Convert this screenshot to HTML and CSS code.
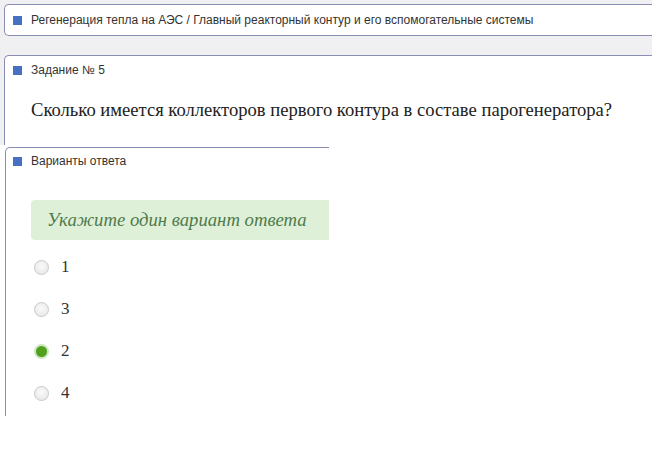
FILE: index.html
```html
<!DOCTYPE html>
<html lang="ru">
  <head>
    <meta charset="UTF-8" />
    <meta name="viewport" content="width=device-width, initial-scale=1.0" />
    <title>Задание № 5</title>
    <link rel="stylesheet" href="styles.css">
  </head>
  <body>
    <!-- верхняя часть: раздел и вопрос -->
    <div class="top">
      <div class="panel path">
        <span class="mark"></span>
        <span class="caption">Регенерация тепла на АЭС / Главный реакторный контур и его вспомогательные системы</span>
      </div>
      <div class="panel task">
        <div class="head">
          <span class="mark"></span>
          <span class="caption">Задание № 5</span>
        </div>
        <p class="question">Сколько имеется коллекторов первого контура в составе парогенератора?</p>
      </div>
    </div>
    <!-- варианты ответа -->
    <div class="bottom">
      <div class="answers">
        <div class="head">
          <span class="mark"></span>
          <span class="caption">Варианты ответа</span>
        </div>
        <div class="hint">Укажите один вариант ответа</div>
        <ul class="options">
          <li><span class="radio"></span>1</li>
          <li><span class="radio"></span>3</li>
          <li><span class="radio checked"></span>2</li>
          <li><span class="radio"></span>4</li>
        </ul>
      </div>
    </div>
  </body>
</html>
```

FILE: styles.css
```css
* {
  padding: 0;
  margin: 0;
  box-sizing: border-box;
}
body {
  height: 460px;
  overflow: hidden;
  background-color: #fff;
  font-family: "Liberation Sans", Arial, sans-serif;
  color: #333;
}
.top {
  padding: 4px 0 0 4px;
  background-color: #f0f0f3;
}
/* панели уходят за правый край, поэтому справа рамки нет */
.panel {
  background-color: #fff;
  border: 1px solid #8a8db3;
  border-right: none;
  border-radius: 5px 0 0 5px;
}
.mark {
  display: block;
  width: 9px;
  height: 9px;
  background-color: #4671c2;
}
.caption {
  font-size: 12px;
  line-height: 14px;
  white-space: nowrap;
}
.path {
  height: 32px;
  display: flex;
  align-items: center;
  gap: 9px;
  padding-left: 8px;
}
.task {
  margin-top: 19px;
  height: 90px;
  border-bottom: none;
  border-radius: 5px 0 0 0;
}
.head {
  height: 28px;
  display: flex;
  align-items: center;
  gap: 9px;
  padding-left: 8px;
}
.question {
  margin-top: 14px;
  padding-left: 26px;
  font-family: "Liberation Serif", "Times New Roman", serif;
  font-size: 18.6px;
  line-height: 24px;
  color: #222;
  white-space: nowrap;
}
.bottom {
  padding: 2px 0 0 5px;
}
.answers {
  width: 324px;
  overflow: hidden;
  padding: 0 0 2px 25px;
  border-top: 1px solid #8a8db3;
  border-left: 1px solid #8a8db3;
  border-radius: 5px 0 0 0;
}
.answers .head {
  height: 26px;
  margin-left: -25px;
  padding-left: 7px;
}
.hint {
  margin-top: 26px;
  height: 40px;
  line-height: 40px;
  padding-left: 16px;
  background-color: #dff0d8;
  border-radius: 4px 0 0 4px;
  font-family: "Liberation Serif", "Times New Roman", serif;
  font-style: italic;
  font-size: 18.7px;
  color: #4f7b4c;
}
.options {
  margin-top: 6px;
  list-style: none;
}
.options li {
  height: 42px;
  display: flex;
  align-items: center;
  gap: 12px;
  padding-left: 3px;
  font-family: "Liberation Serif", "Times New Roman", serif;
  font-size: 17px;
  color: #333;
}
.radio {
  display: block;
  width: 15px;
  height: 15px;
  border-radius: 50%;
  border: 1px solid #c9c9c9;
  background: radial-gradient(circle at 50% 40%, #fafafa 0%, #e4e4e4 100%);
}
.radio.checked {
  border: 2px solid #cfe6c2;
  background: #4fa11e;
}
```
